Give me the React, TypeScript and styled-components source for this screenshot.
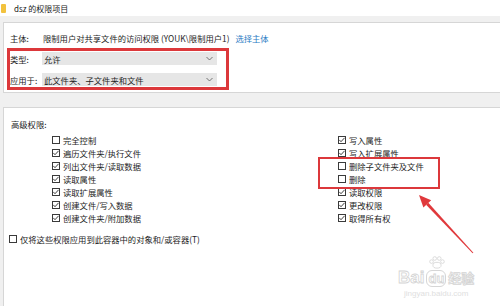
import React from "react";
import styled, { createGlobalStyle } from "styled-components";

const GlobalStyle = createGlobalStyle`
  html, body {
    margin: 0;
    padding: 0;
  }
  body {
    font-family: "Noto Sans CJK SC", "Noto Sans", sans-serif;
    background: #f0f0f0;
    color: #1e1e1e;
  }
`;

const leftPerms = [
  { label: "完全控制", checked: false },
  { label: "遍历文件夹/执行文件", checked: true },
  { label: "列出文件夹/读取数据", checked: true },
  { label: "读取属性", checked: true },
  { label: "读取扩展属性", checked: true },
  { label: "创建文件/写入数据", checked: true },
  { label: "创建文件夹/附加数据", checked: true },
];

const rightPerms = [
  { label: "写入属性", checked: true },
  { label: "写入扩展属性", checked: true },
  { label: "删除子文件夹及文件", checked: false },
  { label: "删除", checked: false },
  { label: "读取权限", checked: true },
  { label: "更改权限", checked: true },
  { label: "取得所有权", checked: true },
];

function CheckBox({ checked }: { checked: boolean }) {
  return (
    <Box>
      {checked && (
        <svg width="8" height="8" viewBox="0 0 8 8">
          <polyline points="1.3,3.9 3,5.7 6.6,1.8" fill="none" stroke="#2a2a2a" strokeWidth="0.9" />
        </svg>
      )}
    </Box>
  );
}

function Chevron() {
  return (
    <svg width="7" height="5" viewBox="0 0 7 5">
      <polyline points="0.5,1 3.5,4 6.5,1" fill="none" stroke="#555" strokeWidth="0.8" />
    </svg>
  );
}

function App() {
  return (
    <Page>
      <GlobalStyle />
      <TitleBar>
        <FolderIcon />
        <TitleText>dsz 的权限项目</TitleText>
      </TitleBar>
      <Body>
        <TopPanel>
          <InfoRow>
            <FieldLabel>主体:</FieldLabel>
            <span>限制用户对共享文件的访问权限 (YOUK\限制用户1)</span>
            <LinkText>选择主体</LinkText>
          </InfoRow>
          <RedFrame>
            <SelectRow>
              <SelectLabel>类型:</SelectLabel>
              <Select>
                <span>允许</span>
                <Chevron />
              </Select>
            </SelectRow>
            <SelectRow>
              <SelectLabel>应用于:</SelectLabel>
              <Select>
                <span>此文件夹、子文件夹和文件</span>
                <Chevron />
              </Select>
            </SelectRow>
          </RedFrame>
        </TopPanel>

        <PermPanel>
          <Heading>高级权限:</Heading>
          <PermGrid>
            <PermColumn>
              {leftPerms.map((p) => (
                <PermRow key={p.label}>
                  <CheckBox checked={p.checked} />
                  {p.label}
                </PermRow>
              ))}
            </PermColumn>
            <PermColumn>
              {rightPerms.map((p) => (
                <PermRow key={p.label}>
                  <CheckBox checked={p.checked} />
                  {p.label}
                </PermRow>
              ))}
            </PermColumn>
          </PermGrid>
          <ApplyRow>
            <CheckBox checked={false} />
            仅将这些权限应用到此容器中的对象和/或容器(T)
          </ApplyRow>
        </PermPanel>
      </Body>

      <Highlight />
      <Arrow width="100" height="90" viewBox="0 0 100 90">
        <polygon points="73.4,72.7 72.6,73.3 26.1,24.8 28.3,22.8" fill="#e0393c" />
        <polygon points="19,15 31.2,20.2 23.4,27.6" fill="#e0393c" />
      </Arrow>
      <Watermark>
        <Paw>
          <svg width="20" height="13" viewBox="0 0 22 14">
            <g fill="none" stroke="#d8d8d8" strokeWidth="1">
              <ellipse cx="11" cy="10" rx="4.5" ry="3.2" />
              <circle cx="5" cy="6" r="2" />
              <circle cx="8.5" cy="2.6" r="2" />
              <circle cx="13.5" cy="2.6" r="2" />
              <circle cx="17" cy="6" r="2" />
            </g>
          </svg>
        </Paw>
        <MarkLine>
          <span>Bai</span>
          <DuBox>du</DuBox>
          <MarkCjk>经验</MarkCjk>
        </MarkLine>
        <MarkUrl>jingyan.baidu.com</MarkUrl>
      </Watermark>
    </Page>
  );
}

export default App;

const Page = styled.div`
  position: relative;
  width: 500px;
  height: 306px;
  overflow: hidden;
  background: #f0f0f0;
  font-size: 8.3px;
`;

const TitleBar = styled.div`
  display: flex;
  align-items: center;
  height: 16px;
  background: #ffffff;
  padding-left: 1px;
`;

const FolderIcon = styled.span`
  width: 5px;
  height: 9px;
  background: #f2c23e;
  border-radius: 1px;
`;

const TitleText = styled.span`
  margin-left: 8px;
  font-size: 8px;
  color: #222;
`;

const Body = styled.div`
  padding: 6px 0 0 3px;
`;

const TopPanel = styled.div`
  box-sizing: border-box;
  height: 71px;
  background: #ffffff;
  border: 1px solid #d6d6d6;
  border-right: none;
  padding: 8px 0 0 6px;
`;

const InfoRow = styled.div`
  display: flex;
  align-items: center;
  height: 13px;
  white-space: nowrap;
`;

const FieldLabel = styled.span`
  width: 33px;
`;

const LinkText = styled.span`
  margin-left: 6px;
  color: #2a7bc4;
`;

const RedFrame = styled.div`
  box-sizing: border-box;
  width: 222px;
  margin: 4px 0 0 -3px;
  border: 3px solid #dc383b;
  padding: 1px 9px 1px 0;
  display: flex;
  flex-direction: column;
  gap: 8px;
`;

const SelectRow = styled.div`
  display: flex;
  align-items: center;
  height: 13px;
`;

const SelectLabel = styled.span`
  width: 32px;
  white-space: nowrap;
`;

const Select = styled.div`
  flex: 1;
  height: 13px;
  display: flex;
  align-items: center;
  justify-content: space-between;
  background: #e6e6e6;
  padding: 0 4px 0 2px;
  white-space: nowrap;
`;

const PermPanel = styled.div`
  box-sizing: border-box;
  height: 200px;
  margin-top: 14px;
  background: #ffffff;
  border: 1px solid #d6d6d6;
  border-right: none;
  padding: 10px 0 0 7px;
`;

const Heading = styled.div`
  height: 13px;
  line-height: 13px;
`;

const PermGrid = styled.div`
  display: grid;
  grid-template-columns: 286px 1fr;
  margin-top: 2px;
  padding-left: 41px;
`;

const PermColumn = styled.div`
  display: flex;
  flex-direction: column;
`;

const PermRow = styled.div`
  display: flex;
  align-items: center;
  height: 13px;
  white-space: nowrap;
`;

const Box = styled.span`
  box-sizing: border-box;
  width: 8px;
  height: 8px;
  margin-right: 3px;
  border: 1px solid #3a3a3a;
  display: flex;
  align-items: center;
  justify-content: center;
  flex-shrink: 0;

  svg {
    margin: -1px;
  }
`;

const ApplyRow = styled(PermRow)`
  margin: 8px 0 0 -2px;
`;

const Highlight = styled.div`
  position: absolute;
  left: 318px;
  top: 157px;
  width: 122px;
  height: 32px;
  box-sizing: border-box;
  border: 2.5px solid #dc383b;
`;

const Arrow = styled.svg`
  position: absolute;
  left: 400px;
  top: 180px;
`;

const Watermark = styled.div`
  position: absolute;
  left: 398px;
  top: 256px;
  display: flex;
  flex-direction: column;
  align-items: flex-start;
  white-space: nowrap;
  pointer-events: none;
`;

const Paw = styled.div`
  margin-left: 29px;
  height: 13px;
`;

const MarkLine = styled.div`
  display: flex;
  align-items: center;
  gap: 2px;
  font-family: "Liberation Sans", sans-serif;
  font-size: 17px;
  font-weight: bold;
  line-height: 18px;
  color: transparent;
  -webkit-text-stroke: 0.8px #d4d4d4;
`;

const MarkCjk = styled.span`
  font-family: "Noto Sans CJK SC", sans-serif;
  font-size: 13px;
`;

const DuBox = styled.span`
  border: 1px solid #d6d6d6;
  border-radius: 6px;
  padding: 0 1px;
  font-size: 13px;
  line-height: 15px;
`;

const MarkUrl = styled.div`
  font-family: "Liberation Sans", sans-serif;
  font-size: 8px;
  color: #e0e0e0;
  margin: 2px 0 0 6px;
`;
